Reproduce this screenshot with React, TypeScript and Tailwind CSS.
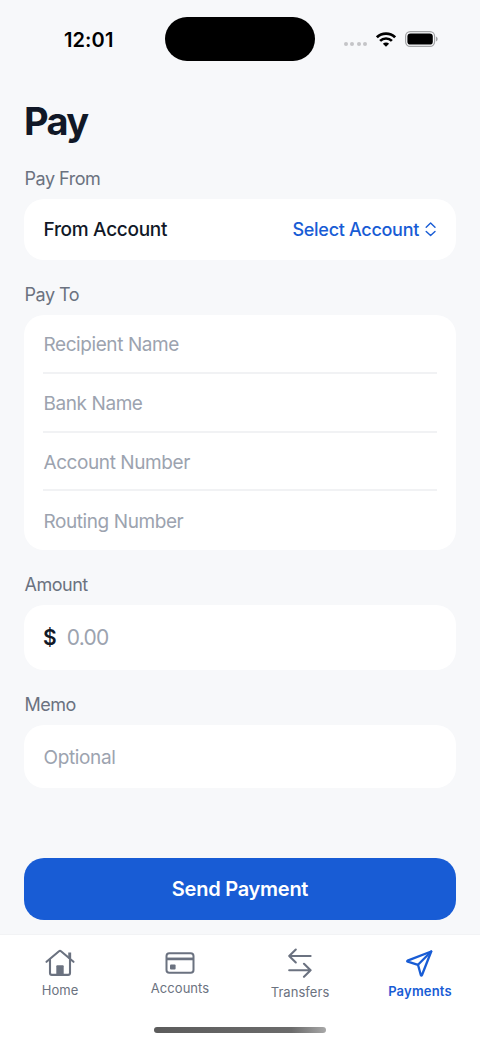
import type { ReactNode } from 'react';

/**
 * Recipient fields, in display order
 */
const recipientFields = ['Recipient Name', 'Bank Name', 'Account Number', 'Routing Number'];

const HomeIcon = () => (
    <svg width="30" height="27" viewBox="0 0 30 27" fill="none" stroke="currentColor" strokeWidth="2.1" strokeLinecap="round" strokeLinejoin="round">
        <path d="M1.5 12.8 14 2.2q1-.8 2 0l12.5 10.6" />
        <path d="M5 10.7v13.4q0 1.8 1.8 1.8h16.4q1.8 0 1.8-1.8V10.7" />
        <path d="M24.7 3.5v6" strokeWidth="2.9" strokeLinecap="butt" />
        <path d="M11.3 25.5v-8.3q0-.9.9-.9h5.6q.9 0 .9.9v8.3z" fill="currentColor" stroke="none" />
    </svg>
);

const CardIcon = () => (
    <svg width="30" height="22" viewBox="0 0 30 22" fill="none" stroke="currentColor" strokeWidth="2">
        <rect x="1.5" y="1.2" width="27" height="19.6" rx="2.8" />
        <path d="M1.5 6.9h27" strokeWidth="2.7" />
        <rect x="5" y="12.6" width="5.6" height="4.9" rx="1" fill="currentColor" stroke="none" />
    </svg>
);

const TransferIcon = () => (
    <svg width="26" height="30" viewBox="0 0 26 30" fill="none" stroke="currentColor" strokeWidth="2.1" strokeLinecap="round" strokeLinejoin="round">
        <path d="M23.6 8H2.2M8.8 1.5 2.2 8l6.6 6.5" />
        <path d="M2.2 22.3h21.4M17 15.8l6.6 6.5-6.6 6.5" />
    </svg>
);

const PlaneIcon = () => (
    <svg width="28" height="28" viewBox="0 0 28 28" fill="none" stroke="currentColor" strokeWidth="2.3" strokeLinecap="round" strokeLinejoin="round">
        <path d="M1.6 11.6 25.2 2.5 16 26q-.6 1.2-1.2 0L12 15.8 1.8 12.7q-1.1-.5-.2-1.1z" />
        <path d="M12 15.8 25.2 2.5" />
    </svg>
);

const StatusBar = () => (
    <header className="flex h-[78px] items-start pt-[17px]">
        <div className="flex h-11 w-[165px] items-center pt-px pl-[64px] text-[20px] font-semibold tracking-[0.1px] text-black">
            12:01
        </div>
        <div className="h-11 w-[150px] rounded-full bg-black" />
        <div className="flex h-11 items-center pl-[29px]">
            <div className="mt-[10px] flex gap-[2.3px]">
                <span className="h-1 w-1 rounded-full bg-[#c4c5c7]" />
                <span className="h-1 w-1 rounded-full bg-[#c4c5c7]" />
                <span className="h-1 w-1 rounded-full bg-[#c4c5c7]" />
                <span className="h-1 w-1 rounded-full bg-[#c4c5c7]" />
            </div>
            <svg className="ml-[9px]" width="20" height="15" viewBox="0 0 20 15" fill="none" stroke="#000" strokeWidth="2.7">
                <path d="M.9 5.3a13 13 0 0 1 18.2 0" />
                <path d="M4.1 8.9a8.4 8.4 0 0 1 11.8 0" />
                <path d="M10 14.8 6.9 11.7a4.4 4.4 0 0 1 6.2 0z" fill="#000" stroke="none" />
            </svg>
            <svg className="ml-[9px]" width="33" height="16" viewBox="0 0 33 16" fill="none">
                <rect x=".6" y=".6" width="29" height="14.8" rx="4.6" stroke="#a3a4a6" strokeWidth="1.2" />
                <rect x="2.4" y="2.4" width="25.4" height="11.2" rx="3.2" fill="#000" />
                <path d="M31 5.6v4.8q1.7-.8 1.7-2.4T31 5.6z" fill="#a3a4a6" />
            </svg>
        </div>
    </header>
);

const Section = ({ label, children }: { label: string; children: ReactNode }) => (
    <section>
        <h2 className="mb-2 h-6 pl-[0.5px] text-[18px] leading-6 tracking-[-0.48px] text-[#6b7280]">{label}</h2>
        {children}
    </section>
);

const tabs = [
    { name: 'Home', icon: <HomeIcon />, style: 'pt-[14px] text-[#6b7280]', labelStyle: 'mt-[6px] tracking-[0.05px]' },
    { name: 'Accounts', icon: <CardIcon />, style: 'pt-[17px] text-[#6b7280]', labelStyle: 'mt-[6px] tracking-[0.05px]' },
    { name: 'Transfers', icon: <TransferIcon />, style: 'pt-[13px] text-[#6b7280]', labelStyle: 'mt-[6px] tracking-[0.05px]' },
    { name: 'Payments', icon: <PlaneIcon />, style: 'pt-[14px] text-[#185cd5]', labelStyle: 'mt-[6px] font-semibold tracking-[0.2px]' },
];

/**
 * App - Payment form screen with bottom tab bar
 */
export default function App() {
    return (
        <div className="flex h-[1043px] w-[480px] flex-col overflow-hidden bg-[#f7f8fa] font-['Inter',sans-serif]">
            <StatusBar />

            <main className="flex flex-1 flex-col px-6 pt-5">
                <h1 className="h-[46px] text-[38px] leading-[46px] font-bold tracking-[-1.6px] text-[#111827]">Pay</h1>

                <div className="flex flex-col gap-[23px] pt-[23px]">
                    <Section label="Pay From">
                        <div className="flex h-[61px] items-center justify-between rounded-[20px] bg-white px-[19px]">
                            <span className="pt-px pl-[0.5px] text-[19px] font-medium tracking-[-0.3px] text-[#111827]">From Account</span>
                            <button className="flex items-center gap-[6px] text-[18px] font-medium tracking-[-0.3px] text-[#185cd5]">
                                Select Account
                                <svg width="12" height="15" viewBox="0 0 12 15" fill="none" stroke="currentColor" strokeWidth="1.4" strokeLinecap="round" strokeLinejoin="round">
                                    <path d="M1.2 5.2 5.6 1 10 5.2M1.2 9.4l4.4 4.2L10 9.4" />
                                </svg>
                            </button>
                        </div>
                    </Section>

                    <Section label="Pay To">
                        <div className="h-[235px] rounded-[20px] bg-white px-[19px]">
                            {recipientFields.map((field) => (
                                <div
                                    key={field}
                                    className="flex h-[58.75px] items-center border-b-2 border-[#f1f2f4] pt-[4px] pl-[0.5px] text-[19px] tracking-[-0.42px] text-[#9ca3af] last:border-b-0 last:pt-[3px]"
                                >
                                    {field}
                                </div>
                            ))}
                        </div>
                    </Section>

                    <Section label="Amount">
                        <div className="flex h-[65px] items-center gap-[10px] rounded-[20px] bg-white px-[19px] text-[21px]">
                            <span className="font-semibold text-[#111827]">$</span>
                            <span className="tracking-[-0.7px] text-[#9ca3af]">0.00</span>
                        </div>
                    </Section>

                    <Section label="Memo">
                        <div className="flex h-[63px] items-center rounded-[20px] bg-white pt-[4px] pr-[19px] pl-[19.5px] text-[19px] tracking-[-0.35px] text-[#9ca3af]">
                            Optional
                        </div>
                    </Section>
                </div>

                <button className="mt-auto mb-[14px] h-[62px] shrink-0 rounded-[20px] bg-[#185cd5] text-[20px] font-semibold tracking-[-0.25px] text-white">
                    Send Payment
                </button>
            </main>

            {/* Bottom tab bar */}
            <footer className="flex h-[109px] shrink-0 flex-col border-t border-[#f2f3f5] bg-white">
                <nav className="grid h-[92px] grid-cols-4">
                    {tabs.map((tab) => (
                        <a key={tab.name} className={`flex flex-col items-center ${tab.style}`}>
                            {tab.icon}
                            <span className={`text-[13px] leading-4 ${tab.labelStyle}`}>{tab.name}</span>
                        </a>
                    ))}
                </nav>
                <div className="mx-auto h-[6px] w-[172px] rounded-full bg-linear-to-r from-[#5c5c5c] via-[#6b6b6b] via-80% to-[#a8a8a8]" />
            </footer>
        </div>
    );
}
